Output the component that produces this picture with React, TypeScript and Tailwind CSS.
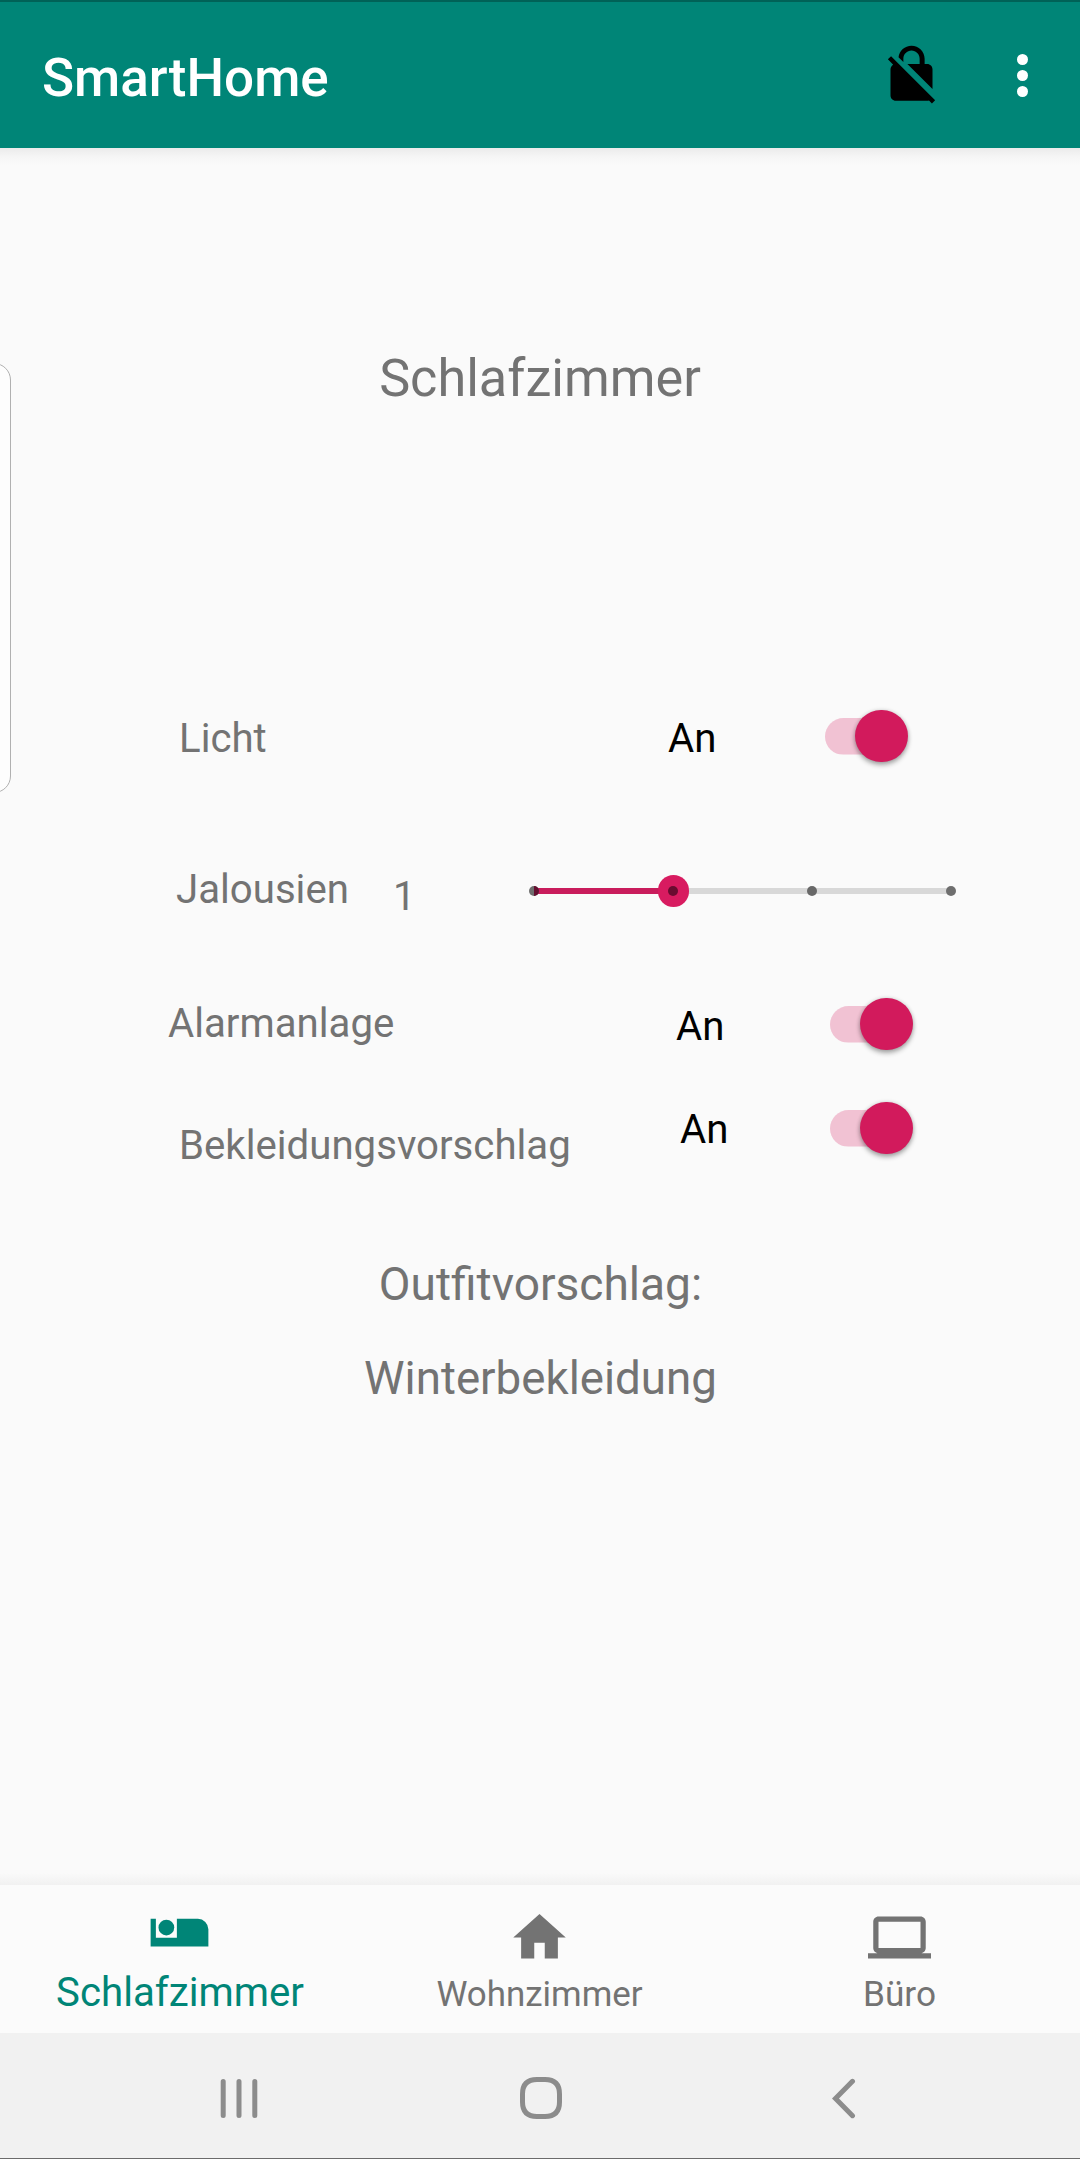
import type { ReactNode } from "react";

function Toggle() {
  return (
    <button
      role="switch"
      aria-checked="true"
      className="mt-[0.5px] flex h-[53px] w-[82.5px] shrink-0 items-center justify-end"
    >
      <span className="-mr-[52px] h-[37px] w-[82px] rounded-full bg-[#d81b60]/25 [clip-path:inset(0_26px_0_0)]" />
      <span className="relative size-[52.5px] rounded-full bg-[#d21a5c] shadow-[0_3px_5px_rgba(0,0,0,0.32),0_0_4px_rgba(0,0,0,0.14)]" />
    </button>
  );
}

function Label({ className, children }: { className: string; children: ReactNode }) {
  return (
    <span className={`shrink-0 whitespace-nowrap text-[40.2px] leading-[47px] ${className}`}>
      {children}
    </span>
  );
}

function Slider() {
  return (
    <div className="relative mt-[15px] ml-[133px] flex h-8 w-[417px] shrink-0 items-center">
      <div className="h-[6px] w-[139px] bg-[#c91c5c]" />
      <div className="h-[6px] flex-1 bg-[#d8d8d8]" />
      <span className="absolute top-[11px] -left-[5px] size-[10px] rounded-full bg-[#6e6e6e]" />
      <span className="absolute top-[11px] left-0 h-[10px] w-[5px] rounded-r-full bg-[#640f30]" />
      <span className="absolute top-0 left-[123.5px] size-[31.5px] rounded-full bg-[#d81b60]" />
      <span className="absolute top-[11px] left-[134px] size-[10px] rounded-full bg-[#6a0c30]" />
      <span className="absolute top-[11px] left-[273px] size-[10px] rounded-full bg-[#686868]" />
      <span className="absolute top-[11px] left-[412px] size-[10px] rounded-full bg-[#6e6e6e]" />
    </div>
  );
}

export default function App() {
  return (
    <div className="relative flex h-[2159px] w-[1080px] flex-col overflow-hidden bg-[#fafafa] font-[Roboto,sans-serif] text-[#737373]">
      <header className="flex h-[148px] shrink-0 items-start border-t-2 border-[#006257] bg-[#008577] pl-[42px]">
        <h1 className="mt-[45px] w-[838px] text-[53px] leading-[62px] font-medium text-white">SmartHome</h1>
        <svg viewBox="0 0 24 24" className="mt-[40.5px] size-[63px] shrink-0 fill-black">
          <path d="M21 21.78 4.22 5 3 6.22l2.04 2.04C4.42 8.6 4 9.25 4 10v10c0 1.1.9 2 2 2h12c.23 0 .45-.05.66-.12L19.78 23 21 21.78zM8.9 6c0-1.71 1.39-3.1 3.1-3.1s3.1 1.39 3.1 3.1v2h-4.66L20 17.56V10c0-1.1-.9-2-2-2h-1V6c0-2.76-2.24-5-5-5-2.56 0-4.64 1.93-4.94 4.4L8.9 7.24V6z" />
        </svg>
        <div className="mt-[52px] ml-[74px] flex w-[11px] flex-col gap-[5px]">
          <span className="size-[11px] shrink-0 rounded-full bg-white" />
          <span className="size-[11px] shrink-0 rounded-full bg-white" />
          <span className="size-[11px] shrink-0 rounded-full bg-white" />
        </div>
      </header>
      <div className="h-[17px] shrink-0 bg-linear-to-b from-[#ebebeb] via-[#f5f5f5] to-[#fafafa]" />

      <main className="flex h-[1708px] shrink-0 flex-col">
        <h2 className="mt-[183px] h-[61px] text-center text-[52.2px] leading-[61px]">Schlafzimmer</h2>

        <div className="mt-[300px] flex h-[151px] items-start pl-[179px]">
          <Label className="mt-[6px] w-[489px]">Licht</Label>
          <Label className="mt-[6px] w-[157px] text-black">An</Label>
          <Toggle />
        </div>
        <div className="flex h-[137px] items-start pl-[176px]">
          <Label className="mt-[6px] w-[217px]">Jalousien</Label>
          <Label className="mt-[13px] w-[8px]">1</Label>
          <Slider />
        </div>
        <div className="flex h-[104px] items-start pl-[168px]">
          <Label className="mt-[3px] w-[508px]">Alarmanlage</Label>
          <Label className="mt-[6px] w-[154px] text-black">An</Label>
          <Toggle />
        </div>
        <div className="flex h-[156px] items-start pl-[179px]">
          <Label className="mt-[21px] w-[501px]">Bekleidungsvorschlag</Label>
          <Label className="mt-[5px] w-[150px] text-black">An</Label>
          <Toggle />
        </div>

        <p className="h-[54px] pl-px text-center text-[46.1px] leading-[54px]">Outfitvorschlag:</p>
        <p className="mt-[41px] h-[53px] pl-px text-center text-[45.7px] leading-[53px]">Winterbekleidung</p>
      </main>

      <div className="h-[12px] shrink-0 bg-linear-to-b from-[#fafafa] to-[#f1f1f1]" />
      <nav className="grid h-[148px] shrink-0 grid-cols-3 bg-[#fbfbfb]">
        <div className="flex flex-col items-center pt-[21px] text-[#008577]">
          <svg viewBox="0 0 24 24" className="mr-[2px] size-[63px] fill-current">
            <circle cx="7" cy="8.2" r="3" />
            <path d="M1 4.9h2v7.2h8V4.9h8a4 4 0 0 1 4 4v6.5H1z" />
          </svg>
          <span className="text-[40.2px] leading-[47px]">Schlafzimmer</span>
        </div>
        <div className="flex flex-col items-center pt-[21px]">
          <svg viewBox="0 0 24 24" className="mr-[2px] size-[63px] fill-current">
            <path d="M10 20v-6h4v6h5v-8h3L12 3 2 12h3v8z" />
          </svg>
          <span className="mt-[5px] mr-px text-[34.9px] leading-[41px]">Wohnzimmer</span>
        </div>
        <div className="flex flex-col items-center pt-[21px]">
          <svg viewBox="0 0 24 24" className="mr-[2px] size-[63px] fill-current">
            <path d="M20 18c1.1 0 1.99-.9 1.99-2L22 6c0-1.1-.9-2-2-2H4c-1.1 0-2 .9-2 2v10c0 1.1.9 2 2 2H0v2h24v-2h-4zM4 6h16v10H4V6z" />
          </svg>
          <span className="mt-[5px] mr-px text-[35.2px] leading-[41px]">Büro</span>
        </div>
      </nav>

      <footer className="flex h-[126px] shrink-0 items-start border-b border-[#6b6b6b] bg-[#f1f1f1] pt-[44px] pl-[220px] text-[#8c8c8c]">
        <svg viewBox="0 0 38 42" className="h-[42px] w-[38px]" fill="none" stroke="currentColor" strokeWidth="5" strokeLinecap="round">
          <path d="M3.2 4.5v34M19 4.5v34M34.8 4.5v34" />
        </svg>
        <svg viewBox="0 0 42 42" className="ml-[262px] size-[42px]" fill="none" stroke="currentColor" strokeWidth="5">
          <path d="M21 2.5h-4C7.5 2.5 2.5 7.5 2.5 17v8c0 9.5 5 14.5 14.5 14.5h8c9.5 0 14.5-5 14.5-14.5v-8C39.5 7.5 34.5 2.5 25 2.5z" />
        </svg>
        <svg viewBox="0 0 24 42" className="ml-[270px] h-[42px] w-[24px]" fill="none" stroke="currentColor" strokeWidth="5" strokeLinecap="round">
          <path d="M20.5 4.3 3.5 21.5l17 17.2" />
        </svg>
      </footer>

      <div className="absolute top-[363px] -left-[40px] h-[430px] w-[51px] rounded-[17px] border-[1.5px] border-[#b0b0b0] bg-[#fdfdfd]" />
    </div>
  );
}
